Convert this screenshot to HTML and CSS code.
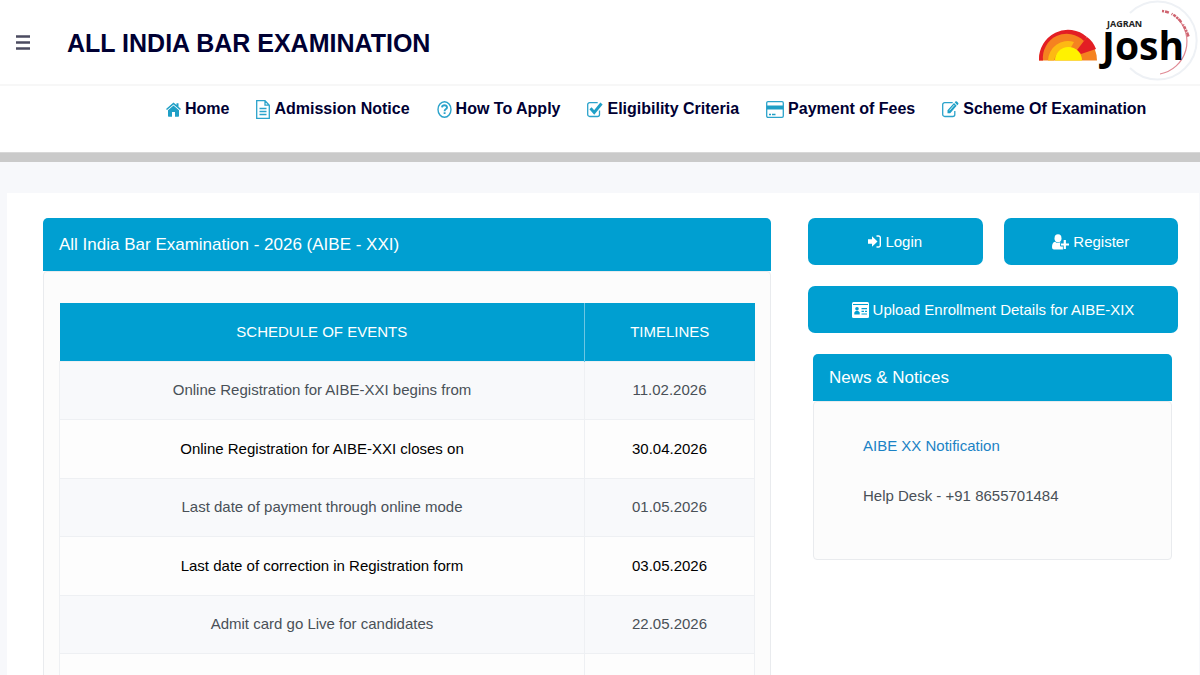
FILE: index.html
```html
<!DOCTYPE html>
<html lang="en">
    <head>
        <meta charset="UTF-8">
        <meta name="viewport" content="width=device-width, initial-scale=1">
        <title>All India Bar Examination</title>
        <link rel="stylesheet" href="styles.css">
    </head>
    <body>
        <header class="topbar">
            <button class="menu" aria-label="Menu">
                <svg width="14" height="15" viewBox="0 0 14 15"><path d="M0 1.5h14M0 7.5h14M0 13.5h14" stroke="#4b4b60" stroke-width="2.4"/></svg>
            </button>
            <h1>ALL INDIA BAR EXAMINATION</h1>
            <svg class="logo" width="162" height="84" viewBox="0 0 162 84" role="img" aria-label="Jagran Josh">
                <!-- stamp behind the name -->
                <path d="M92 13A39 39 0 1 1 92 68" fill="none" stroke="#eef1f5" stroke-width="2"/>
                <path d="M138 17A33 33 0 0 1 122 74" fill="none" stroke="#e08a94" stroke-width="1.2"/>
                <path d="M124 11Q143 13 151 38" fill="none" stroke="#cf6470" stroke-width="2.5" stroke-dasharray="2 1 4 3 1 1 3 1"/>
                <!-- sun -->
                <path d="M1 60.500A29 29.500 0 0 1 59 60.500Z" fill="#f58220"/>
                <path d="M1 60.500A29 29.500 0 0 1 49 37L46 41A24 24 0 0 0 5 60.500Z" fill="#e31e24"/>
                <path d="M10 60.500A20 20 0 0 1 36 42L32 49A14 14 0 0 0 16 60.500Z" fill="#fdb913"/>
                <path d="M49 37Q55 41 58 49L43 54L39 50Z" fill="#e31e24"/>
                <path d="M17 60.500A13.500 13.500 0 0 1 44 60.500Z" fill="#fff200"/>
                <text class="logo-small" x="69" y="27">JAGRAN</text>
                <text class="logo-name" x="64" y="60">Josh</text>
            </svg>
        </header>

        <nav class="mainnav">
            <a href="#"><svg width="15" height="15" viewBox="0 0 15 15"><path d="M7.500 3.400L13 8.200V14a.7.7 0 0 1-.7.7H9V10H6v4.700H2.700A.7.7 0 0 1 2 14V8.200zM7.500.4L10.500 3V1.200h2V4.700L15 7l-1 1.100L7.500 2.400 1 8.100 0 7z" fill="#1f9fc6"/></svg> Home</a>
            <a href="#"><svg width="14" height="19" viewBox="0 0 14 19"><path d="M.700.700H9L13.300 5.200V18.300H.700zM9 .700V5.200h4.300M3.500 8.500h7M3.500 11.500h7M3.500 14.500h7" fill="none" stroke="#2ba3cb" stroke-width="1.300"/></svg> Admission Notice</a>
            <a href="#"><svg width="15" height="17" viewBox="0 0 15 17"><ellipse cx="7.500" cy="8.500" rx="6.500" ry="7.700" fill="none" stroke="#2ba3cb" stroke-width="1.400"/><path d="M5 6.300Q5.200 4.300 7.500 4.300T10 6.400Q10 7.500 8.600 8.300 7.600 8.900 7.600 10.200M7.600 11.300v1.800" fill="none" stroke="#2ba3cb" stroke-width="1.900"/></svg> How To Apply</a>
            <a href="#"><svg width="16" height="17" viewBox="0 0 16 17"><path d="M12.500 9.500v4a2 2 0 0 1-2 2H2.700a2 2 0 0 1-2-2V3.600a2 2 0 0 1 2-2h8" fill="none" stroke="#2ba3cb" stroke-width="1.300"/><path d="M3.500 7.300l3.700 4.200L14.500 2.500" fill="none" stroke="#1f9fc6" stroke-width="2.900"/></svg> Eligibility Criteria</a>
            <a href="#"><svg width="18" height="17" viewBox="0 0 18 17"><rect x=".7" y=".7" width="16.600" height="15.600" rx="1.300" fill="none" stroke="#2ba3cb" stroke-width="1.300"/><path d="M.7 4.500h16.600V8.500H.7z" fill="#1f9fc6"/><path d="M3 13.500h2M6 13.500h3.500" stroke="#1f9fc6" stroke-width="1.300"/></svg> Payment of Fees</a>
            <a href="#"><svg width="17" height="17" viewBox="0 0 17 17"><path d="M12.800 10v3.500a2 2 0 0 1-2 2H2.700a2 2 0 0 1-2-2V3.600a2 2 0 0 1 2-2h8" fill="none" stroke="#2ba3cb" stroke-width="1.300"/><path d="M5.500 12.300V9.300L12 2l2.700 2.700-6.500 7.600zM12.700 1.200L13.800.300Q14.500 0 15.200.700L16.300 2Q16.700 2.700 16.200 3.300L15.300 4.200z" fill="#1f9fc6"/><path d="M7.500 9.400L12.300 4" stroke="#fff" stroke-width=".8"/></svg> Scheme Of Examination</a>
        </nav>

        <main class="page">
            <section class="panel">
                <h2>All India Bar Examination - 2026 (AIBE - XXI)</h2>
                <div class="panel-body">
                    <table class="schedule">
                        <thead>
                            <tr><th>SCHEDULE OF EVENTS</th><th>TIMELINES</th></tr>
                        </thead>
                        <tbody>
                            <tr><td>Online Registration for AIBE-XXI begins from</td><td>11.02.2026</td></tr>
                            <tr><td>Online Registration for AIBE-XXI closes on</td><td>30.04.2026</td></tr>
                            <tr><td>Last date of payment through online mode</td><td>01.05.2026</td></tr>
                            <tr><td>Last date of correction in Registration form</td><td>03.05.2026</td></tr>
                            <tr><td>Admit card go Live for candidates</td><td>22.05.2026</td></tr>
                            <tr><td></td><td></td></tr>
                        </tbody>
                    </table>
                </div>
            </section>

            <aside class="side">
                <div class="actions">
                    <button class="btn"><svg width="13" height="13" viewBox="0 0 13 13"><path d="M0 4.200h4V1.200L9.500 6.500 4 11.800V8.800H0z" fill="#fff"/><path d="M8.500 1h2a1.800 1.800 0 0 1 1.800 1.800v7.400A1.800 1.800 0 0 1 10.500 12h-2" fill="none" stroke="#fff" stroke-width="1.400"/></svg> Login</button>
                    <button class="btn"><svg width="17" height="16" viewBox="0 0 17 16"><ellipse cx="6" cy="4.300" rx="3.500" ry="4.100" fill="#fff"/><path d="M3 7.800Q6 10.300 8.300 8V12h3v3.500H2Q0 15.500 0 13.300 0 8.500 3 7.800z" fill="#fff"/><path d="M12.800 5.500v10M8.500 10.500h8.500" stroke="#009fd1" stroke-width="3.800"/><path d="M12.800 6v9M9 10.500h8" stroke="#fff" stroke-width="2.200"/></svg> Register</button>
                    <button class="btn wide"><svg width="17" height="16" viewBox="0 0 17 16"><rect width="17" height="16" rx="1.500" fill="#fff"/><path d="M1 2.500h15" stroke="#009fd1"/><circle cx="5" cy="6.700" r="1.800" fill="#009fd1"/><path d="M2.300 12.500V10.500Q3 8.800 5 8.800T7.700 10.500v2zM9.500 6h5.500v1.200H9.500zM9.500 8.700h2.500v1.200H9.500zM13 8.700h2v1.200h-2zM9.500 11.400h5.500v1.200H9.500z" fill="#009fd1"/></svg> Upload Enrollment Details for AIBE-XIX</button>
                </div>
                <section class="panel news">
                    <h2>News &amp; Notices</h2>
                    <div class="panel-body">
                        <p><a href="#">AIBE XX Notification</a></p>
                        <p>Help Desk - +91 8655701484</p>
                    </div>
                </section>
            </aside>
        </main>
    </body>
</html>
```

FILE: styles.css
```css
* {
    box-sizing: border-box;
}
body {
    margin: 0;
    background-color: #f7f8fb;
    font-family: "Liberation Sans", Arial, sans-serif;
    font-size: 15px;
    line-height: 26px;
    color: #495057;
}
h1, h2, p {
    margin: 0;
}
button {
    font: inherit;
    border: none;
    cursor: pointer;
}
a {
    text-decoration: none;
}

/* header */
.topbar {
    display: flex;
    align-items: center;
    height: 86px;
    padding-left: 16px;
    background-color: #fff;
    border-bottom: 2px solid #f7f7f7;
}
.menu {
    display: flex;
    padding: 0;
    margin-right: 37px;
    background: none;
}
.topbar h1 {
    padding-top: 2px;
    font-size: 25px;
    line-height: 36px;
    color: #000033;
}
.logo {
    margin-left: auto;
}
.logo-small {
    font: bold 9px "Open Sans", sans-serif;
    fill: #222;
}
.logo-name {
    font: bold 39px "Open Sans", sans-serif;
    fill: #000;
}
.mainnav {
    display: flex;
    gap: 27px;
    height: 67px;
    padding: 10px 16px 0 166px;
    background-color: #fff;
    box-shadow: 0 9px 0 #cacaca, inset 0 -1px 0 #d8d8d8;
}
.mainnav a {
    display: flex;
    align-items: center;
    gap: 4px;
    height: 26px;
    white-space: nowrap;
    font-size: 16px;
    font-weight: bold;
    color: #000033;
}

/* content */
.page {
    display: grid;
    grid-template-columns: 728fr 370fr;
    gap: 37px;
    align-items: start;
    margin: 40px 1px 0 7px;
    padding: 25px 21px 24px 36px;
    background-color: #fff;
}
.panel h2 {
    padding: 14px 16px 13px;
    border-radius: 5px 5px 0 0;
    background-color: #009fd1;
    color: #fff;
    font-size: 17px;
    line-height: 26px;
    font-weight: normal;
}
.panel-body {
    padding: 31px 15px;
    border: 1px solid #e9ebee;
    border-radius: 4px;
    background-color: #fcfcfc;
}
.schedule {
    width: 100%;
    border-collapse: collapse;
    text-align: center;
}
.schedule th {
    height: 58px;
    padding: 0 12px;
    background-color: #009fd1;
    color: #fff;
    font-weight: normal;
}
.schedule th + th {
    width: 170px;
    border-left: 1px solid #6cc6e3;
}
.schedule td {
    height: 58px;
    padding: 0 12px;
    border: 1px solid #eef0f3;
}
.schedule tbody tr:nth-child(odd) {
    background-color: #f8f9fb;
}
.schedule tbody tr:nth-child(even) {
    background-color: #fdfdfd;
    color: #000;
}
.schedule tbody tr:nth-child(even) td {
    height: 59px;
}

/* sidebar */
.actions {
    display: grid;
    grid-template-columns: 1fr 1fr;
    gap: 21px;
}
.btn {
    display: flex;
    align-items: center;
    justify-content: center;
    gap: 4px;
    height: 47px;
    border-radius: 7px;
    background-color: #009fd1;
    color: #fff;
}
.wide {
    grid-column: span 2;
}
.news {
    margin: 21px 6px 0 5px;
}
.news h2 {
    padding: 11px 16px 10px;
}
.news .panel-body {
    padding: 31px 49px 50px;
}
.news p + p {
    margin-top: 24px;
}
.news a {
    color: #1b82c5;
}
```
